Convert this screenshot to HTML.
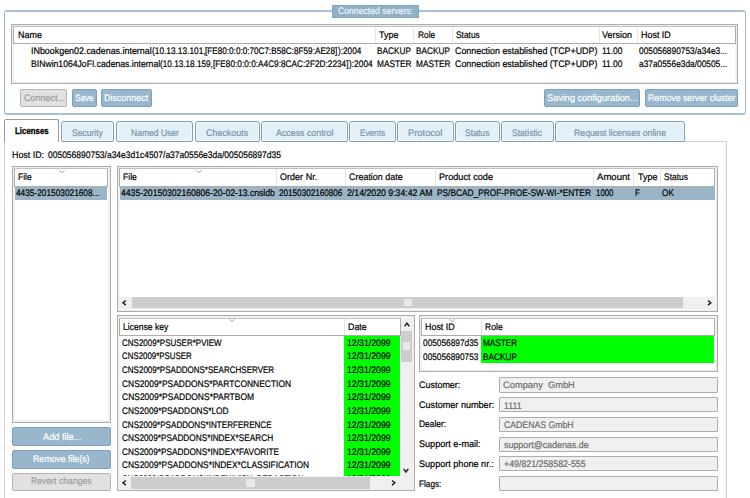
<!DOCTYPE html>
<html lang="en">
<head>
<meta charset="utf-8">
<title>License server administration</title>
<style>
html,body{margin:0;padding:0;background:#fff;}
body{width:750px;height:498px;position:relative;overflow:hidden;font-family:"Liberation Sans",sans-serif;font-size:9.5px;}
.g{display:contents;}
.b{position:absolute;box-sizing:border-box;margin:0;padding:0;}
button.b{font:inherit;overflow:visible;text-align:left;}
.t{position:absolute;white-space:pre;transform-origin:0 0;line-height:14px;height:14px;-webkit-text-stroke:0.2px;}
svg{position:absolute;overflow:visible;}
</style>
</head>
<body>
<section class="g servers" aria-label="Connected servers">
<div class="b groupbox" style="left:4px;top:10px;width:742px;height:105px;border:1px solid #9dbad0;border-top:2px solid #a8c2d5;border-bottom:2px solid #a8c2d5;border-radius:3px;"></div>
<div class="b legend" style="left:332px;top:5px;width:87px;height:13px;background:#91b0c8;border:1px solid #86a7c1;">
<span class="t" style="left:5.00px;top:-2px;color:#eef4f8;transform:matrix(0.9103,0,0.001,1,0,0);">Connected servers:</span>
</div>
<div class="g table" role="table">
<div class="b frame" style="left:11px;top:24px;width:727px;height:60px;border:1px solid #adadad;background:#fff;box-shadow:inset 0 0 0 1.5px #eeeeee;"></div>
<div class="b head" style="left:13px;top:26px;width:723px;height:18px;border:1px solid #adadad;border-top-color:#c0c0c0;background:#fff;"></div>
<div class="g thead" role="row">
<div class="b sep" style="left:375px;top:27px;width:1px;height:16px;background:#e6e6e6;"></div>
<div class="b sep" style="left:413px;top:27px;width:1px;height:16px;background:#e6e6e6;"></div>
<div class="b sep" style="left:452px;top:27px;width:1px;height:16px;background:#e6e6e6;"></div>
<div class="b sep" style="left:599px;top:27px;width:1px;height:16px;background:#e6e6e6;"></div>
<div class="b sep" style="left:637px;top:27px;width:1px;height:16px;background:#e6e6e6;"></div>
<span class="t" style="left:17.50px;top:28px;color:#000;transform:matrix(0.9465,0,0.001,1,0,0);">Name</span>
<span class="t" style="left:379.00px;top:28px;color:#000;transform:matrix(0.9455,0,0.001,1,0,0);">Type</span>
<span class="t" style="left:417.50px;top:28px;color:#000;transform:matrix(0.8793,0,0.001,1,0,0);">Role</span>
<span class="t" style="left:456.00px;top:28px;color:#000;transform:matrix(0.8831,0,0.001,1,0,0);">Status</span>
<span class="t" style="left:602.30px;top:28px;color:#000;transform:matrix(0.9495,0,0.001,1,0,0);">Version</span>
<span class="t" style="left:640.60px;top:28px;color:#000;transform:matrix(0.9400,0,0.001,1,0,0);">Host ID</span>
</div>
<div class="g row" role="row">
<span class="t" style="left:31.20px;top:44px;color:#000;transform:matrix(0.9365,0,0.001,1,0,0);">INbookgen02.cadenas.internal</span>
<span class="t" style="left:152.00px;top:44px;color:#000;transform:matrix(0.8745,0,0.001,1,0,0);">(10.13.13.101,</span>
<span class="t" style="left:205.30px;top:44px;color:#000;transform:matrix(0.8601,0,0.001,1,0,0);">[FE80:0:0:0:70C7:B58C:8F59:AE28]</span>
<span class="t" style="left:337.50px;top:44px;color:#000;transform:matrix(0.8645,0,0.001,1,0,0);">):2004</span>
<span class="t" style="left:377.40px;top:44px;color:#000;transform:matrix(0.8672,0,0.001,1,0,0);">BACKUP</span>
<span class="t" style="left:416.00px;top:44px;color:#000;transform:matrix(0.8697,0,0.001,1,0,0);">BACKUP</span>
<span class="t" style="left:454.60px;top:44px;color:#000;transform:matrix(0.9346,0,0.001,1,0,0);">Connection established (TCP+UDP)</span>
<span class="t" style="left:601.50px;top:44px;color:#000;transform:matrix(0.8877,0,0.001,1,0,0);">11.00</span>
<span class="t" style="left:639.30px;top:44px;color:#000;transform:matrix(0.8784,0,0.001,1,0,0);">005056890753/a34e3...</span>
</div>
<div class="g row" role="row">
<span class="t" style="left:31.20px;top:57px;color:#000;transform:matrix(0.9087,0,0.001,1,0,0);">BINwin1064JoFI.cadenas.internal</span>
<span class="t" style="left:160.00px;top:57px;color:#000;transform:matrix(0.8630,0,0.001,1,0,0);">(10.13.18.159,</span>
<span class="t" style="left:213.00px;top:57px;color:#000;transform:matrix(0.8697,0,0.001,1,0,0);">[FE80:0:0:0:A4C9:8CAC:2F2D:2234]</span>
<span class="t" style="left:348.50px;top:57px;color:#000;transform:matrix(0.8794,0,0.001,1,0,0);">):2004</span>
<span class="t" style="left:377.40px;top:57px;color:#000;transform:matrix(0.8736,0,0.001,1,0,0);">MASTER</span>
<span class="t" style="left:416.00px;top:57px;color:#000;transform:matrix(0.8736,0,0.001,1,0,0);">MASTER</span>
<span class="t" style="left:454.60px;top:57px;color:#000;transform:matrix(0.9346,0,0.001,1,0,0);">Connection established (TCP+UDP)</span>
<span class="t" style="left:601.50px;top:57px;color:#000;transform:matrix(0.8877,0,0.001,1,0,0);">11.00</span>
<span class="t" style="left:639.30px;top:57px;color:#000;transform:matrix(0.8784,0,0.001,1,0,0);">a37a0556e3da/00505...</span>
</div>
</div>
<div class="g actions">
<button class="b btn" type="button" disabled style="left:20px;top:89px;width:47px;height:18px;background:#e1e1e1;border:1px solid #b4b4b4;border-radius:2px;">
<span class="t" style="left:2.70px;top:1px;color:#9a9ea2;transform:matrix(0.9440,0,0.001,1,0,0);">Connect...</span>
</button>
<button class="b btn" type="button" style="left:72px;top:89px;width:25px;height:18px;background:#98b6cc;border:1px solid #7da1bd;border-radius:2px;">
<span class="t" style="left:2.00px;top:1px;color:#ffffff;transform:matrix(0.8583,0,0.001,1,0,0);">Save</span>
</button>
<button class="b btn" type="button" style="left:101px;top:89px;width:51px;height:18px;background:#98b6cc;border:1px solid #7da1bd;border-radius:2px;">
<span class="t" style="left:2.30px;top:1px;color:#ffffff;transform:matrix(0.9401,0,0.001,1,0,0);">Disconnect</span>
</button>
<button class="b btn" type="button" style="left:544px;top:89px;width:96px;height:18px;background:#98b6cc;border:1px solid #7da1bd;border-radius:2px;">
<span class="t" style="left:2.20px;top:1px;color:#ffffff;transform:matrix(0.9635,0,0.001,1,0,0);">Saving configuration...</span>
</button>
<button class="b btn" type="button" style="left:645px;top:89px;width:93px;height:18px;background:#98b6cc;border:1px solid #7da1bd;border-radius:2px;">
<span class="t" style="left:1.60px;top:1px;color:#ffffff;transform:matrix(0.9196,0,0.001,1,0,0);">Remove server cluster</span>
</button>
</div>
</section>
<section class="g tabwidget">
<div class="b tabpanel-bg" style="left:4px;top:141px;width:722.5px;height:400px;border:1px solid #d0d0d0;background:#fff;"></div>
<nav class="g tabbar" role="tablist">
<div class="b tabgap" style="left:59px;top:141px;width:497px;height:1px;background:#fff;"></div>
<div class="b tab active" role="tab" aria-selected="true" style="left:4px;top:119px;width:55px;height:23px;background:#fff;border:1px solid #9a9a9a;border-bottom:none;border-radius:2px 2px 0 0;">
<span class="t" style="left:9.50px;top:4px;color:#000;font-weight:bold;-webkit-text-stroke:0.3px;transform:matrix(0.8283,0,0.001,1,0,0);">Licenses</span>
</div>
<div class="b tab" role="tab" style="left:61px;top:121px;width:53px;height:21px;background:#e4f0f8;border:1px solid #809fb9;border-radius:3px 3px 2px 2px;box-shadow:inset 0 0 0 1px #f2f8fc;">
<span class="t" style="left:10.00px;top:4px;color:#7796ae;transform:matrix(0.8969,0,0.001,1,0,0);">Security</span>
</div>
<div class="b tab" role="tab" style="left:116px;top:121px;width:77px;height:21px;background:#e4f0f8;border:1px solid #809fb9;border-radius:3px 3px 2px 2px;box-shadow:inset 0 0 0 1px #f2f8fc;">
<span class="t" style="left:13.80px;top:4px;color:#7796ae;transform:matrix(0.8980,0,0.001,1,0,0);">Named User</span>
</div>
<div class="b tab" role="tab" style="left:195px;top:121px;width:65px;height:21px;background:#e4f0f8;border:1px solid #809fb9;border-radius:3px 3px 2px 2px;box-shadow:inset 0 0 0 1px #f2f8fc;">
<span class="t" style="left:10.20px;top:4px;color:#7796ae;transform:matrix(0.9398,0,0.001,1,0,0);">Checkouts</span>
</div>
<div class="b tab" role="tab" style="left:261px;top:121px;width:87px;height:21px;background:#e4f0f8;border:1px solid #809fb9;border-radius:3px 3px 2px 2px;box-shadow:inset 0 0 0 1px #f2f8fc;">
<span class="t" style="left:13.80px;top:4px;color:#7796ae;transform:matrix(0.9289,0,0.001,1,0,0);">Access control</span>
</div>
<div class="b tab" role="tab" style="left:349px;top:121px;width:47px;height:21px;background:#e4f0f8;border:1px solid #809fb9;border-radius:3px 3px 2px 2px;box-shadow:inset 0 0 0 1px #f2f8fc;">
<span class="t" style="left:10.00px;top:4px;color:#7796ae;transform:matrix(0.8603,0,0.001,1,0,0);">Events</span>
</div>
<div class="b tab" role="tab" style="left:397px;top:121px;width:57px;height:21px;background:#e4f0f8;border:1px solid #809fb9;border-radius:3px 3px 2px 2px;box-shadow:inset 0 0 0 1px #f2f8fc;">
<span class="t" style="left:10.30px;top:4px;color:#7796ae;transform:matrix(0.9836,0,0.001,1,0,0);">Protocol</span>
</div>
<div class="b tab" role="tab" style="left:455px;top:121px;width:45px;height:21px;background:#e4f0f8;border:1px solid #809fb9;border-radius:3px 3px 2px 2px;box-shadow:inset 0 0 0 1px #f2f8fc;">
<span class="t" style="left:9.00px;top:4px;color:#7796ae;transform:matrix(0.9090,0,0.001,1,0,0);">Status</span>
</div>
<div class="b tab" role="tab" style="left:501px;top:121px;width:53px;height:21px;background:#e4f0f8;border:1px solid #809fb9;border-radius:3px 3px 2px 2px;box-shadow:inset 0 0 0 1px #f2f8fc;">
<span class="t" style="left:10.20px;top:4px;color:#7796ae;transform:matrix(0.9015,0,0.001,1,0,0);">Statistic</span>
</div>
<div class="b tab" role="tab" style="left:555px;top:121px;width:130px;height:21px;background:#e4f0f8;border:1px solid #809fb9;border-radius:3px 3px 2px 2px;box-shadow:inset 0 0 0 1px #f2f8fc;">
<span class="t" style="left:18.20px;top:4px;color:#7796ae;transform:matrix(0.9167,0,0.001,1,0,0);">Request licenses online</span>
</div>
</nav>
<div class="g tabpanel" role="tabpanel">
<p class="g hostid">
<span class="t" style="left:12.20px;top:148px;color:#000;transform:matrix(0.9322,0,0.001,1,0,0);">Host ID:</span>
<span class="t" style="left:47.90px;top:148px;color:#000;transform:matrix(0.8923,0,0.001,1,0,0);">005056890753/a34e3d1c4507/a37a0556e3da/005056897d35</span>
</p>
<div class="g filelist" role="table">
<div class="b frame" style="left:12px;top:166px;width:99px;height:257px;border:1px solid #adadad;background:#fff;box-shadow:inset 0 0 0 1.5px #eeeeee;"></div>
<div class="b head" style="left:14px;top:168px;width:94px;height:19px;border:1px solid #adadad;border-top-color:#c0c0c0;background:#fff;"></div>
<div class="g thead" role="row">
<svg width="6" height="3" viewBox="0 0 6 3" style="left:58.5px;top:169.8px"><path d="M0.3 0.3 L3 2.6 L5.7 0.3" fill="none" stroke="#909090" stroke-width="0.8"/></svg>
<span class="t" style="left:18.20px;top:170px;color:#000;transform:matrix(0.8939,0,0.001,1,0,0);">File</span>
</div>
<div class="g row selected" role="row">
<div class="b sel" style="left:15px;top:187px;width:92px;height:13px;background:#9cb5c6;"></div>
<span class="t" style="left:16.40px;top:186px;color:#000;transform:matrix(0.8731,0,0.001,1,0,0);">4435-201503021608...</span>
</div>
</div>
<div class="g licensefiles" role="table">
<div class="b frame" style="left:117px;top:166px;width:601px;height:146px;border:1px solid #adadad;background:#fff;box-shadow:inset 0 0 0 1.5px #eeeeee;"></div>
<div class="b head" style="left:119px;top:168px;width:596px;height:19px;border:1px solid #adadad;border-top-color:#c0c0c0;background:#fff;"></div>
<div class="g thead" role="row">
<div class="b sep" style="left:276px;top:169px;width:1px;height:17px;background:#e6e6e6;"></div>
<div class="b sep" style="left:345px;top:169px;width:1px;height:17px;background:#e6e6e6;"></div>
<div class="b sep" style="left:435px;top:169px;width:1px;height:17px;background:#e6e6e6;"></div>
<div class="b sep" style="left:593px;top:169px;width:1px;height:17px;background:#e6e6e6;"></div>
<div class="b sep" style="left:633px;top:169px;width:1px;height:17px;background:#e6e6e6;"></div>
<div class="b sep" style="left:660px;top:169px;width:1px;height:17px;background:#e6e6e6;"></div>
<svg width="6" height="3" viewBox="0 0 6 3" style="left:195.8px;top:169.8px"><path d="M0.3 0.3 L3 2.6 L5.7 0.3" fill="none" stroke="#909090" stroke-width="0.8"/></svg>
<span class="t" style="left:122.50px;top:170px;color:#000;transform:matrix(0.9069,0,0.001,1,0,0);">File</span>
<span class="t" style="left:280.10px;top:170px;color:#000;transform:matrix(0.9520,0,0.001,1,0,0);">Order Nr.</span>
<span class="t" style="left:348.50px;top:170px;color:#000;transform:matrix(0.9411,0,0.001,1,0,0);">Creation date</span>
<span class="t" style="left:438.60px;top:170px;color:#000;transform:matrix(0.9643,0,0.001,1,0,0);">Product code</span>
<span class="t" style="left:596.90px;top:170px;color:#000;transform:matrix(1.0072,0,0.001,1,0,0);">Amount</span>
<span class="t" style="left:637.50px;top:170px;color:#000;transform:matrix(0.9455,0,0.001,1,0,0);">Type</span>
<span class="t" style="left:663.60px;top:170px;color:#000;transform:matrix(0.8905,0,0.001,1,0,0);">Status</span>
</div>
<div class="g row selected" role="row">
<div class="b sel" style="left:120px;top:187px;width:595px;height:13px;background:#9cb5c6;"></div>
<span class="t" style="left:120.70px;top:186px;color:#000;transform:matrix(0.9070,0,0.001,1,0,0);">4435-20150302160806-20-02-13.cnsldb</span>
<span class="t" style="left:278.80px;top:186px;color:#000;transform:matrix(0.8570,0,0.001,1,0,0);">20150302160806</span>
<span class="t" style="left:346.70px;top:186px;color:#000;transform:matrix(0.9195,0,0.001,1,0,0);">2/14/2020 9:34:42 AM</span>
<span class="t" style="left:437.30px;top:186px;color:#000;transform:matrix(0.8764,0,0.001,1,0,0);">PS/BCAD_PROF-PROE-SW-WI-*ENTER</span>
<span class="t" style="left:595.90px;top:186px;color:#000;transform:matrix(0.8272,0,0.001,1,0,0);">1000</span>
<span class="t" style="left:635.20px;top:186px;color:#000;transform:matrix(0.8238,0,0.001,1,0,0);">F</span>
<span class="t" style="left:662.30px;top:186px;color:#000;transform:matrix(0.8656,0,0.001,1,0,0);">OK</span>
</div>
<div class="g hscroll">
<div class="b track" style="left:119px;top:297px;width:596px;height:12px;background:#f0f0f0;"></div>
<div class="b thumb" style="left:132px;top:297px;width:551px;height:11px;background:#cdcdcd;"></div>
<div class="b grip" style="left:404px;top:299px;width:8px;height:7px;background:#e8e8e8;"></div>
<svg width="5" height="6" viewBox="0 0 5 6" style="left:122.4px;top:299.9px"><path d="M3.8 0.5 L1.0 2.8 L3.8 5.1" fill="none" stroke="#1c1c1c" stroke-width="1.45"/></svg>
<svg width="5" height="6" viewBox="0 0 5 6" style="left:706.7px;top:299.9px"><path d="M1.0 0.5 L3.8 2.8 L1.0 5.1" fill="none" stroke="#1c1c1c" stroke-width="1.45"/></svg>
</div>
</div>
<div class="g licensekeys" role="table">
<div class="b frame" style="left:117px;top:315px;width:298px;height:176px;border:1px solid #adadad;background:#fff;box-shadow:inset 0 0 0 1.5px #eeeeee;"></div>
<div class="b head" style="left:119px;top:318px;width:282px;height:18px;border:1px solid #adadad;border-top-color:#c0c0c0;background:#fff;"></div>
<div class="g thead" role="row">
<div class="b sep" style="left:344px;top:319px;width:1px;height:16px;background:#e6e6e6;"></div>
<svg width="6" height="3" viewBox="0 0 6 3" style="left:229px;top:319.3px"><path d="M0.3 0.3 L3 2.6 L5.7 0.3" fill="none" stroke="#909090" stroke-width="0.8"/></svg>
<span class="t" style="left:122.60px;top:320px;color:#000;transform:matrix(0.9026,0,0.001,1,0,0);">License key</span>
<span class="t" style="left:347.60px;top:320px;color:#000;transform:matrix(0.9307,0,0.001,1,0,0);">Date</span>
</div>
<div class="b valid" style="left:344px;top:336px;width:56px;height:140px;background:#00ff00;"></div>
<div class="g row" role="row">
<span class="t" style="left:121.60px;top:336px;color:#000;transform:matrix(0.8420,0,0.001,1,0,0);">CNS2009*PSUSER*PVIEW</span>
<span class="t" style="left:346.80px;top:336px;color:#000;transform:matrix(0.9167,0,0.001,1,0,0);">12/31/2099</span>
</div>
<div class="g row" role="row">
<span class="t" style="left:121.60px;top:349px;color:#000;transform:matrix(0.8287,0,0.001,1,0,0);">CNS2009*PSUSER</span>
<span class="t" style="left:346.80px;top:349px;color:#000;transform:matrix(0.9167,0,0.001,1,0,0);">12/31/2099</span>
</div>
<div class="g row" role="row">
<span class="t" style="left:121.60px;top:363px;color:#000;transform:matrix(0.8431,0,0.001,1,0,0);">CNS2009*PSADDONS*SEARCHSERVER</span>
<span class="t" style="left:346.80px;top:363px;color:#000;transform:matrix(0.9167,0,0.001,1,0,0);">12/31/2099</span>
</div>
<div class="g row" role="row">
<span class="t" style="left:121.60px;top:377px;color:#000;transform:matrix(0.8888,0,0.001,1,0,0);">CNS2009*PSADDONS*PARTCONNECTION</span>
<span class="t" style="left:346.80px;top:377px;color:#000;transform:matrix(0.9167,0,0.001,1,0,0);">12/31/2099</span>
</div>
<div class="g row" role="row">
<span class="t" style="left:121.60px;top:390px;color:#000;transform:matrix(0.8924,0,0.001,1,0,0);">CNS2009*PSADDONS*PARTBOM</span>
<span class="t" style="left:346.80px;top:390px;color:#000;transform:matrix(0.9167,0,0.001,1,0,0);">12/31/2099</span>
</div>
<div class="g row" role="row">
<span class="t" style="left:121.60px;top:404px;color:#000;transform:matrix(0.8777,0,0.001,1,0,0);">CNS2009*PSADDONS*LOD</span>
<span class="t" style="left:346.80px;top:404px;color:#000;transform:matrix(0.9167,0,0.001,1,0,0);">12/31/2099</span>
</div>
<div class="g row" role="row">
<span class="t" style="left:121.60px;top:418px;color:#000;transform:matrix(0.8509,0,0.001,1,0,0);">CNS2009*PSADDONS*INTERFERENCE</span>
<span class="t" style="left:346.80px;top:418px;color:#000;transform:matrix(0.9167,0,0.001,1,0,0);">12/31/2099</span>
</div>
<div class="g row" role="row">
<span class="t" style="left:121.60px;top:431px;color:#000;transform:matrix(0.8672,0,0.001,1,0,0);">CNS2009*PSADDONS*INDEX*SEARCH</span>
<span class="t" style="left:346.80px;top:431px;color:#000;transform:matrix(0.9167,0,0.001,1,0,0);">12/31/2099</span>
</div>
<div class="g row" role="row">
<span class="t" style="left:121.60px;top:445px;color:#000;transform:matrix(0.8683,0,0.001,1,0,0);">CNS2009*PSADDONS*INDEX*FAVORITE</span>
<span class="t" style="left:346.80px;top:445px;color:#000;transform:matrix(0.9167,0,0.001,1,0,0);">12/31/2099</span>
</div>
<div class="g row" role="row">
<span class="t" style="left:121.60px;top:458px;color:#000;transform:matrix(0.8822,0,0.001,1,0,0);">CNS2009*PSADDONS*INDEX*CLASSIFICATION</span>
<span class="t" style="left:346.80px;top:458px;color:#000;transform:matrix(0.9167,0,0.001,1,0,0);">12/31/2099</span>
</div>
<div class="g row" role="row">
<span class="t" style="left:121.60px;top:472px;color:#000;transform:matrix(0.8319,0,0.001,1,0,0);clip-path:inset(0 0 10.0px 0);">CNS2009*PSADDONS*INDEX*VISU_REDACTION</span>
<span class="t" style="left:346.80px;top:472px;color:#000;transform:matrix(0.9167,0,0.001,1,0,0);clip-path:inset(0 0 10.0px 0);">12/31/2099</span>
</div>
<div class="g vscroll">
<div class="b track" style="left:401px;top:318px;width:13px;height:172px;background:#f0f0f0;"></div>
<div class="b thumb" style="left:401px;top:331px;width:11px;height:31px;background:#cdcdcd;"></div>
<div class="b grip" style="left:403px;top:342px;width:7px;height:8px;background:#e8e8e8;"></div>
<svg width="6" height="5" viewBox="0 0 6 5" style="left:403.5px;top:321.6px"><path d="M0.6 4.2 L2.95 1.1 L5.3 4.2" fill="none" stroke="#1c1c1c" stroke-width="1.45"/></svg>
<svg width="6" height="5" viewBox="0 0 6 5" style="left:403.4px;top:467.7px"><path d="M0.6 0.9 L2.95 4.0 L5.3 0.9" fill="none" stroke="#1c1c1c" stroke-width="1.45"/></svg>
</div>
<div class="g hscroll">
<div class="b track" style="left:119px;top:476px;width:283px;height:14px;background:#f0f0f0;"></div>
<div class="b thumb" style="left:131px;top:477px;width:239px;height:12px;background:#cdcdcd;"></div>
<div class="b grip" style="left:246px;top:479px;width:9px;height:8px;background:#e8e8e8;"></div>
<svg width="5" height="6" viewBox="0 0 5 6" style="left:122.4px;top:479.7px"><path d="M3.8 0.5 L1.0 2.8 L3.8 5.1" fill="none" stroke="#1c1c1c" stroke-width="1.45"/></svg>
<svg width="5" height="6" viewBox="0 0 5 6" style="left:391.2px;top:479.7px"><path d="M1.0 0.5 L3.8 2.8 L1.0 5.1" fill="none" stroke="#1c1c1c" stroke-width="1.45"/></svg>
</div>
</div>
<div class="g hostids" role="table">
<div class="b frame" style="left:419px;top:315px;width:299px;height:57px;border:1px solid #adadad;background:#fff;box-shadow:inset 0 0 0 1.5px #eeeeee;"></div>
<div class="b head" style="left:421px;top:318px;width:294px;height:18px;border:1px solid #adadad;border-top-color:#c0c0c0;background:#fff;"></div>
<div class="g thead" role="row">
<div class="b sep" style="left:481px;top:319px;width:1px;height:16px;background:#e6e6e6;"></div>
<svg width="6" height="3" viewBox="0 0 6 3" style="left:448.5px;top:319.3px"><path d="M0.3 0.3 L3 2.6 L5.7 0.3" fill="none" stroke="#909090" stroke-width="0.8"/></svg>
<span class="t" style="left:425.00px;top:320px;color:#000;transform:matrix(0.9369,0,0.001,1,0,0);">Host ID</span>
<span class="t" style="left:484.60px;top:320px;color:#000;transform:matrix(0.9049,0,0.001,1,0,0);">Role</span>
</div>
<div class="b valid" style="left:481px;top:336px;width:233px;height:27px;background:#00ff00;"></div>
<div class="g row" role="row">
<span class="t" style="left:423.30px;top:336px;color:#000;transform:matrix(0.8735,0,0.001,1,0,0);">005056897d35</span>
<span class="t" style="left:483.30px;top:336px;color:#000;transform:matrix(0.8635,0,0.001,1,0,0);">MASTER</span>
</div>
<div class="g row" role="row">
<span class="t" style="left:423.30px;top:350px;color:#000;transform:matrix(0.8735,0,0.001,1,0,0);">005056890753</span>
<span class="t" style="left:483.30px;top:350px;color:#000;transform:matrix(0.8672,0,0.001,1,0,0);">BACKUP</span>
</div>
</div>
<form class="g details">
<div class="g field">
<label class="t" style="left:419.20px;top:378px;color:#000;transform:matrix(0.9420,0,0.001,1,0,0);">Customer:</label>
<div class="b lineedit" role="textbox" aria-readonly="true" style="left:499px;top:377px;width:219px;height:16px;background:#f0f0f0;border:1px solid #adadad;border-radius:1px;">
<span class="t" style="left:2.80px;top:0px;color:#6e6e6e;font-size:9.3px;transform:matrix(1.0000,0,0.001,1,0,0);">Company  GmbH</span>
</div>
</div>
<div class="g field">
<label class="t" style="left:419.20px;top:398px;color:#000;transform:matrix(0.9557,0,0.001,1,0,0);">Customer number:</label>
<div class="b lineedit" role="textbox" aria-readonly="true" style="left:499px;top:397px;width:219px;height:15px;background:#f0f0f0;border:1px solid #adadad;border-radius:1px;">
<span class="t" style="left:3.60px;top:1px;color:#6e6e6e;transform:matrix(0.9189,0,0.001,1,0,0);">1111</span>
</div>
</div>
<div class="g field">
<label class="t" style="left:419.20px;top:417px;color:#000;transform:matrix(0.8845,0,0.001,1,0,0);">Dealer:</label>
<div class="b lineedit" role="textbox" aria-readonly="true" style="left:499px;top:417px;width:219px;height:15px;background:#f0f0f0;border:1px solid #adadad;border-radius:1px;">
<span class="t" style="left:3.60px;top:0px;color:#6e6e6e;transform:matrix(0.9154,0,0.001,1,0,0);">CADENAS GmbH</span>
</div>
</div>
<div class="g field">
<label class="t" style="left:419.20px;top:437px;color:#000;transform:matrix(0.9560,0,0.001,1,0,0);">Support e-mail:</label>
<div class="b lineedit" role="textbox" aria-readonly="true" style="left:499px;top:437px;width:219px;height:15px;background:#f0f0f0;border:1px solid #adadad;border-radius:1px;">
<span class="t" style="left:3.60px;top:0px;color:#6e6e6e;transform:matrix(0.9350,0,0.001,1,0,0);">support@cadenas.de</span>
</div>
</div>
<div class="g field">
<label class="t" style="left:419.20px;top:457px;color:#000;transform:matrix(0.9554,0,0.001,1,0,0);">Support phone nr.:</label>
<div class="b lineedit" role="textbox" aria-readonly="true" style="left:499px;top:456px;width:219px;height:15px;background:#f0f0f0;border:1px solid #adadad;border-radius:1px;">
<span class="t" style="left:3.60px;top:0px;color:#6e6e6e;transform:matrix(0.9275,0,0.001,1,0,0);">+49/821/258582-555</span>
</div>
</div>
<div class="g field">
<label class="t" style="left:419.20px;top:477px;color:#000;transform:matrix(0.8614,0,0.001,1,0,0);">Flags:</label>
<div class="b lineedit" role="textbox" aria-readonly="true" style="left:499px;top:476px;width:219px;height:15px;background:#f0f0f0;border:1px solid #adadad;border-radius:1px;">
</div>
</div>
</form>
<div class="g actions">
<button class="b btn" type="button" style="left:12px;top:427px;width:99px;height:19px;background:#98b6cc;border:1px solid #7da1bd;border-radius:2px;">
<span class="t" style="left:29.50px;top:2px;color:#ffffff;transform:matrix(0.9666,0,0.001,1,0,0);">Add file...</span>
</button>
<button class="b btn" type="button" style="left:12px;top:450px;width:99px;height:19px;background:#98b6cc;border:1px solid #7da1bd;border-radius:2px;">
<span class="t" style="left:20.40px;top:1px;color:#ffffff;transform:matrix(0.9206,0,0.001,1,0,0);">Remove file(s)</span>
</button>
<button class="b btn" type="button" disabled style="left:12px;top:473px;width:99px;height:18px;background:#e1e1e1;border:1px solid #b4b4b4;border-radius:2px;">
<span class="t" style="left:17.90px;top:0px;color:#9a9ea2;transform:matrix(0.9119,0,0.001,1,0,0);">Revert changes</span>
</button>
</div>
</div>
</section>
</body>
</html>
